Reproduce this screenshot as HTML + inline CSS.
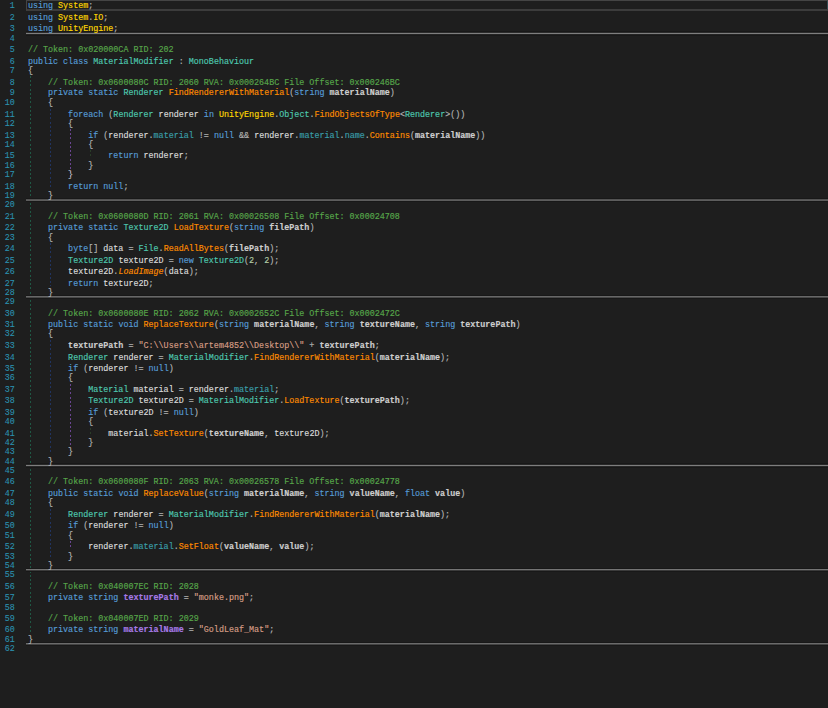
<!DOCTYPE html>
<html><head><meta charset="utf-8"><style>
html,body{margin:0;padding:0;background:#1e1e1e;width:828px;height:708px;overflow:hidden}
.ln,.nm{position:absolute;font-family:"Liberation Mono",monospace;font-size:8.38px;line-height:9.360px;white-space:pre;color:#dcdcdc}
.ln{left:27.90px}
.nm{left:0;width:14.9px;text-align:right;color:#2b91af}
i{font-style:normal}
.k{color:#569cd6}.n{color:#ffd700}.t{color:#4ec9b0}.c{color:#57a64a}.m{color:#ff8c00}
.mi{color:#ff8c00;font-style:italic}.p{color:#cdcdcd;font-weight:bold}.l{color:#dcdcdc}
.f{color:#a67ae6;font-weight:bold}.pr{color:#3a9faa}.s{color:#d69d85}.num{color:#b5cea8}.o{color:#b4b4b4}
.sep{position:absolute;left:26px;right:0;height:1px}
.g{position:absolute;width:1px}
.cur{position:absolute;left:26px;top:0;width:840px;height:11px;box-sizing:border-box;border:1px solid #444;border-bottom:2px solid #3c3c3c}
.curr{position:absolute;left:827px;top:1px;width:1px;height:8px;background:#324a50}
.ln i:not(.p):not(.f),.ln{-webkit-text-stroke:0.15px currentColor}.nm{-webkit-text-stroke:0.1px currentColor}
</style></head><body>
<div class="cur"></div><div class="curr"></div>
<div class="g" style="left:29.91px;top:74.45px;height:558.45px;background:repeating-linear-gradient(to bottom,transparent 0,transparent 2.0px,#1f5844 2.0px,#1f5844 4.0px,transparent 4.0px,transparent 4.227px)"></div><div class="g" style="left:50.03px;top:106.65px;height:82.10px;background:repeating-linear-gradient(to bottom,transparent 0,transparent 2.0px,#213460 2.0px,#213460 4.0px,transparent 4.0px,transparent 4.227px)"></div><div class="g" style="left:70.16px;top:127.45px;height:52.15px;background:repeating-linear-gradient(to bottom,transparent 0,transparent 2.0px,#6a4592 2.0px,#6a4592 4.0px,transparent 4.0px,transparent 4.227px)"></div><div class="g" style="left:90.27px;top:148.40px;height:10.10px;background:repeating-linear-gradient(to bottom,transparent 0,transparent 2.0px,#2a3d28 2.0px,#2a3d28 4.0px,transparent 4.0px,transparent 4.227px)"></div><div class="g" style="left:50.03px;top:240.85px;height:44.85px;background:repeating-linear-gradient(to bottom,transparent 0,transparent 2.0px,#213460 2.0px,#213460 4.0px,transparent 4.0px,transparent 4.227px)"></div><div class="g" style="left:50.03px;top:337.70px;height:116.55px;background:repeating-linear-gradient(to bottom,transparent 0,transparent 2.0px,#213460 2.0px,#213460 4.0px,transparent 4.0px,transparent 4.227px)"></div><div class="g" style="left:70.16px;top:381.75px;height:63.20px;background:repeating-linear-gradient(to bottom,transparent 0,transparent 2.0px,#6a4592 2.0px,#6a4592 4.0px,transparent 4.0px,transparent 4.227px)"></div><div class="g" style="left:90.27px;top:425.55px;height:10.35px;background:repeating-linear-gradient(to bottom,transparent 0,transparent 2.0px,#2a3d28 2.0px,#2a3d28 4.0px,transparent 4.0px,transparent 4.227px)"></div><div class="g" style="left:50.03px;top:506.60px;height:52.20px;background:repeating-linear-gradient(to bottom,transparent 0,transparent 2.0px,#213460 2.0px,#213460 4.0px,transparent 4.0px,transparent 4.227px)"></div><div class="g" style="left:70.16px;top:539.15px;height:10.30px;background:repeating-linear-gradient(to bottom,transparent 0,transparent 2.0px,#6a4592 2.0px,#6a4592 4.0px,transparent 4.0px,transparent 4.227px)"></div>
<div class="sep" style="top:32px;background:rgb(44,44,44)"></div><div class="sep" style="top:33px;background:rgb(126,126,126)"></div><div class="sep" style="top:34px;background:rgb(35,35,35)"></div><div class="sep" style="top:31px;background:#181818"></div><div class="sep" style="top:35px;background:#181818"></div><div class="sep" style="top:199px;background:rgb(82,82,82)"></div><div class="sep" style="top:200px;background:rgb(93,93,93)"></div><div class="sep" style="top:198px;background:#181818"></div><div class="sep" style="top:201px;background:#181818"></div><div class="sep" style="top:296px;background:rgb(103,103,103)"></div><div class="sep" style="top:297px;background:rgb(72,72,72)"></div><div class="sep" style="top:295px;background:#181818"></div><div class="sep" style="top:298px;background:#181818"></div><div class="sep" style="top:464px;background:rgb(40,40,40)"></div><div class="sep" style="top:465px;background:rgb(126,126,126)"></div><div class="sep" style="top:466px;background:rgb(40,40,40)"></div><div class="sep" style="top:463px;background:#181818"></div><div class="sep" style="top:467px;background:#181818"></div><div class="sep" style="top:569px;background:rgb(116,116,116)"></div><div class="sep" style="top:570px;background:rgb(59,59,59)"></div><div class="sep" style="top:568px;background:#181818"></div><div class="sep" style="top:571px;background:#181818"></div><div class="sep" style="top:643px;background:rgb(107,107,107)"></div><div class="sep" style="top:644px;background:rgb(68,68,68)"></div><div class="sep" style="top:642px;background:#181818"></div><div class="sep" style="top:645px;background:#181818"></div>
<div class="nm" style="top:2.45px">1</div><div class="nm" style="top:13.87px">2</div><div class="nm" style="top:25.37px">3</div><div class="nm" style="top:34.67px">4</div><div class="nm" style="top:46.42px">5</div><div class="nm" style="top:57.62px">6</div><div class="nm" style="top:67.12px">7</div><div class="nm" style="top:78.57px">8</div><div class="nm" style="top:89.42px">9</div><div class="nm" style="top:99.32px">10</div><div class="nm" style="top:110.77px">11</div><div class="nm" style="top:120.12px">12</div><div class="nm" style="top:131.57px">13</div><div class="nm" style="top:141.07px">14</div><div class="nm" style="top:152.47px">15</div><div class="nm" style="top:161.77px">16</div><div class="nm" style="top:171.42px">17</div><div class="nm" style="top:182.87px">18</div><div class="nm" style="top:192.02px">19</div><div class="nm" style="top:201.37px">20</div><div class="nm" style="top:212.67px">21</div><div class="nm" style="top:224.22px">22</div><div class="nm" style="top:233.52px">23</div><div class="nm" style="top:244.97px">24</div><div class="nm" style="top:256.52px">25</div><div class="nm" style="top:267.92px">26</div><div class="nm" style="top:279.67px">27</div><div class="nm" style="top:288.97px">28</div><div class="nm" style="top:298.37px">29</div><div class="nm" style="top:309.87px">30</div><div class="nm" style="top:321.42px">31</div><div class="nm" style="top:330.37px">32</div><div class="nm" style="top:341.97px">33</div><div class="nm" style="top:353.52px">34</div><div class="nm" style="top:364.97px">35</div><div class="nm" style="top:374.42px">36</div><div class="nm" style="top:385.92px">37</div><div class="nm" style="top:397.42px">38</div><div class="nm" style="top:408.87px">39</div><div class="nm" style="top:418.22px">40</div><div class="nm" style="top:429.67px">41</div><div class="nm" style="top:439.17px">42</div><div class="nm" style="top:448.22px">43</div><div class="nm" style="top:457.52px">44</div><div class="nm" style="top:467.27px">45</div><div class="nm" style="top:478.37px">46</div><div class="nm" style="top:489.87px">47</div><div class="nm" style="top:499.27px">48</div><div class="nm" style="top:510.87px">49</div><div class="nm" style="top:522.27px">50</div><div class="nm" style="top:531.82px">51</div><div class="nm" style="top:543.37px">52</div><div class="nm" style="top:552.72px">53</div><div class="nm" style="top:562.07px">54</div><div class="nm" style="top:571.37px">55</div><div class="nm" style="top:582.62px">56</div><div class="nm" style="top:594.37px">57</div><div class="nm" style="top:603.62px">58</div><div class="nm" style="top:615.07px">59</div><div class="nm" style="top:626.47px">60</div><div class="nm" style="top:636.17px">61</div><div class="nm" style="top:645.07px">62</div>
<div class="ln" style="top:2.45px"><i class="k">using</i> <i class="n">System</i><i class="o">;</i></div><div class="ln" style="top:13.87px"><i class="k">using</i> <i class="n">System</i><i class="o">.</i><i class="n">IO</i><i class="o">;</i></div><div class="ln" style="top:25.37px"><i class="k">using</i> <i class="n">UnityEngine</i><i class="o">;</i></div><div class="ln" style="top:34.67px"></div><div class="ln" style="top:46.42px"><i class="c">// Token: 0x020000CA RID: 202</i></div><div class="ln" style="top:57.62px"><i class="k">public</i> <i class="k">class</i> <i class="t">MaterialModifier</i><i class="o"> : </i><i class="t">MonoBehaviour</i></div><div class="ln" style="top:67.12px"><i class="o">{</i></div><div class="ln" style="top:78.57px">    <i class="c">// Token: 0x0600080C RID: 2060 RVA: 0x000264BC File Offset: 0x000246BC</i></div><div class="ln" style="top:89.42px">    <i class="k">private</i> <i class="k">static</i> <i class="t">Renderer</i> <i class="m">FindRendererWithMaterial</i><i class="o">(</i><i class="k">string</i> <i class="p">materialName</i><i class="o">)</i></div><div class="ln" style="top:99.32px"><i class="o">    {</i></div><div class="ln" style="top:110.77px">        <i class="k">foreach</i><i class="o"> (</i><i class="t">Renderer</i> <i class="l">renderer</i> <i class="k">in</i> <i class="n">UnityEngine</i><i class="o">.</i><i class="t">Object</i><i class="o">.</i><i class="m">FindObjectsOfType</i><i class="o">&lt;</i><i class="t">Renderer</i><i class="o">&gt;())</i></div><div class="ln" style="top:120.12px"><i class="o">        {</i></div><div class="ln" style="top:131.57px">            <i class="k">if</i><i class="o"> (</i><i class="l">renderer</i><i class="o">.</i><i class="pr">material</i><i class="o"> != </i><i class="k">null</i><i class="o"> &amp;&amp; </i><i class="l">renderer</i><i class="o">.</i><i class="pr">material</i><i class="o">.</i><i class="pr">name</i><i class="o">.</i><i class="m">Contains</i><i class="o">(</i><i class="p">materialName</i><i class="o">))</i></div><div class="ln" style="top:141.07px"><i class="o">            {</i></div><div class="ln" style="top:152.47px">                <i class="k">return</i> <i class="l">renderer</i><i class="o">;</i></div><div class="ln" style="top:161.77px"><i class="o">            }</i></div><div class="ln" style="top:171.42px"><i class="o">        }</i></div><div class="ln" style="top:182.87px">        <i class="k">return</i> <i class="k">null</i><i class="o">;</i></div><div class="ln" style="top:192.02px"><i class="o">    }</i></div><div class="ln" style="top:201.37px"></div><div class="ln" style="top:212.67px">    <i class="c">// Token: 0x0600080D RID: 2061 RVA: 0x00026508 File Offset: 0x00024708</i></div><div class="ln" style="top:224.22px">    <i class="k">private</i> <i class="k">static</i> <i class="t">Texture2D</i> <i class="m">LoadTexture</i><i class="o">(</i><i class="k">string</i> <i class="p">filePath</i><i class="o">)</i></div><div class="ln" style="top:233.52px"><i class="o">    {</i></div><div class="ln" style="top:244.97px">        <i class="k">byte</i><i class="o">[] </i><i class="l">data</i><i class="o"> = </i><i class="t">File</i><i class="o">.</i><i class="m">ReadAllBytes</i><i class="o">(</i><i class="p">filePath</i><i class="o">);</i></div><div class="ln" style="top:256.52px">        <i class="t">Texture2D</i> <i class="l">texture2D</i><i class="o"> = </i><i class="k">new</i> <i class="t">Texture2D</i><i class="o">(</i><i class="num">2</i><i class="o">, </i><i class="num">2</i><i class="o">);</i></div><div class="ln" style="top:267.92px">        <i class="l">texture2D</i><i class="o">.</i><i class="mi">LoadImage</i><i class="o">(</i><i class="l">data</i><i class="o">);</i></div><div class="ln" style="top:279.67px">        <i class="k">return</i> <i class="l">texture2D</i><i class="o">;</i></div><div class="ln" style="top:288.97px"><i class="o">    }</i></div><div class="ln" style="top:298.37px"></div><div class="ln" style="top:309.87px">    <i class="c">// Token: 0x0600080E RID: 2062 RVA: 0x0002652C File Offset: 0x0002472C</i></div><div class="ln" style="top:321.42px">    <i class="k">public</i> <i class="k">static</i> <i class="k">void</i> <i class="m">ReplaceTexture</i><i class="o">(</i><i class="k">string</i> <i class="p">materialName</i><i class="o">, </i><i class="k">string</i> <i class="p">textureName</i><i class="o">, </i><i class="k">string</i> <i class="p">texturePath</i><i class="o">)</i></div><div class="ln" style="top:330.37px"><i class="o">    {</i></div><div class="ln" style="top:341.97px">        <i class="p">texturePath</i><i class="o"> = </i><i class="s">&quot;C:\\Users\\artem4852\\Desktop\\&quot;</i><i class="o"> + </i><i class="p">texturePath</i><i class="o">;</i></div><div class="ln" style="top:353.52px">        <i class="t">Renderer</i> <i class="l">renderer</i><i class="o"> = </i><i class="t">MaterialModifier</i><i class="o">.</i><i class="m">FindRendererWithMaterial</i><i class="o">(</i><i class="p">materialName</i><i class="o">);</i></div><div class="ln" style="top:364.97px">        <i class="k">if</i><i class="o"> (</i><i class="l">renderer</i><i class="o"> != </i><i class="k">null</i><i class="o">)</i></div><div class="ln" style="top:374.42px"><i class="o">        {</i></div><div class="ln" style="top:385.92px">            <i class="t">Material</i> <i class="l">material</i><i class="o"> = </i><i class="l">renderer</i><i class="o">.</i><i class="pr">material</i><i class="o">;</i></div><div class="ln" style="top:397.42px">            <i class="t">Texture2D</i> <i class="l">texture2D</i><i class="o"> = </i><i class="t">MaterialModifier</i><i class="o">.</i><i class="m">LoadTexture</i><i class="o">(</i><i class="p">texturePath</i><i class="o">);</i></div><div class="ln" style="top:408.87px">            <i class="k">if</i><i class="o"> (</i><i class="l">texture2D</i><i class="o"> != </i><i class="k">null</i><i class="o">)</i></div><div class="ln" style="top:418.22px"><i class="o">            {</i></div><div class="ln" style="top:429.67px">                <i class="l">material</i><i class="o">.</i><i class="m">SetTexture</i><i class="o">(</i><i class="p">textureName</i><i class="o">, </i><i class="l">texture2D</i><i class="o">);</i></div><div class="ln" style="top:439.17px"><i class="o">            }</i></div><div class="ln" style="top:448.22px"><i class="o">        }</i></div><div class="ln" style="top:457.52px"><i class="o">    }</i></div><div class="ln" style="top:467.27px"></div><div class="ln" style="top:478.37px">    <i class="c">// Token: 0x0600080F RID: 2063 RVA: 0x00026578 File Offset: 0x00024778</i></div><div class="ln" style="top:489.87px">    <i class="k">public</i> <i class="k">static</i> <i class="k">void</i> <i class="m">ReplaceValue</i><i class="o">(</i><i class="k">string</i> <i class="p">materialName</i><i class="o">, </i><i class="k">string</i> <i class="p">valueName</i><i class="o">, </i><i class="k">float</i> <i class="p">value</i><i class="o">)</i></div><div class="ln" style="top:499.27px"><i class="o">    {</i></div><div class="ln" style="top:510.87px">        <i class="t">Renderer</i> <i class="l">renderer</i><i class="o"> = </i><i class="t">MaterialModifier</i><i class="o">.</i><i class="m">FindRendererWithMaterial</i><i class="o">(</i><i class="p">materialName</i><i class="o">);</i></div><div class="ln" style="top:522.27px">        <i class="k">if</i><i class="o"> (</i><i class="l">renderer</i><i class="o"> != </i><i class="k">null</i><i class="o">)</i></div><div class="ln" style="top:531.82px"><i class="o">        {</i></div><div class="ln" style="top:543.37px">            <i class="l">renderer</i><i class="o">.</i><i class="pr">material</i><i class="o">.</i><i class="m">SetFloat</i><i class="o">(</i><i class="p">valueName</i><i class="o">, </i><i class="p">value</i><i class="o">);</i></div><div class="ln" style="top:552.72px"><i class="o">        }</i></div><div class="ln" style="top:562.07px"><i class="o">    }</i></div><div class="ln" style="top:571.37px"></div><div class="ln" style="top:582.62px">    <i class="c">// Token: 0x040007EC RID: 2028</i></div><div class="ln" style="top:594.37px">    <i class="k">private</i> <i class="k">string</i> <i class="f">texturePath</i><i class="o"> = </i><i class="s">&quot;monke.png&quot;</i><i class="o">;</i></div><div class="ln" style="top:603.62px"></div><div class="ln" style="top:615.07px">    <i class="c">// Token: 0x040007ED RID: 2029</i></div><div class="ln" style="top:626.47px">    <i class="k">private</i> <i class="k">string</i> <i class="f">materialName</i><i class="o"> = </i><i class="s">&quot;GoldLeaf_Mat&quot;</i><i class="o">;</i></div><div class="ln" style="top:636.17px"><i class="o">}</i></div><div class="ln" style="top:645.07px"></div>
</body></html>
